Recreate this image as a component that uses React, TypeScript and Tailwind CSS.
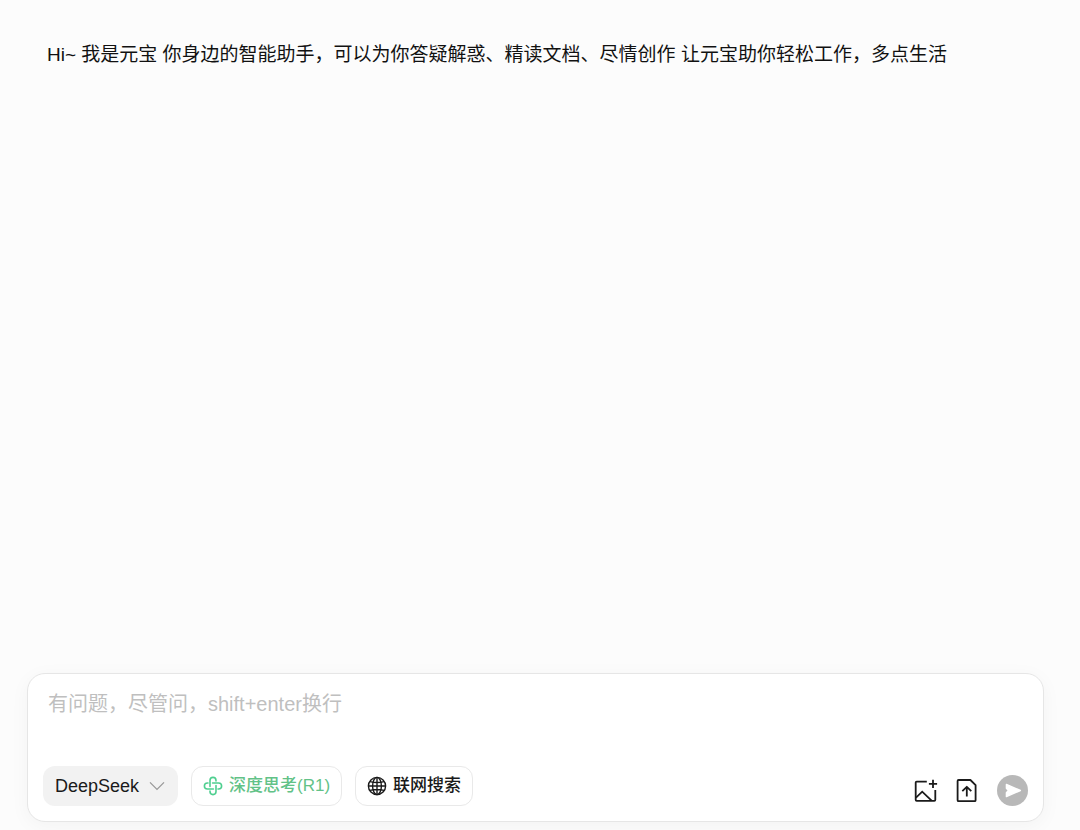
import { useState } from "react";

const fontStack = "font-['Liberation_Sans','Noto_Sans_CJK_SC',sans-serif]";

function ThinkIcon() {
  return (
    <svg className="size-5 shrink-0" viewBox="0 0 20 20" fill="none" stroke="#4fcf90" strokeWidth="1.6" strokeLinecap="round" aria-hidden="true">
      {[0, 90, 180, 270].map((angle) => (
        <path key={angle} d="M7 10.4V4.4a3 3 0 0 1 6 0V5" transform={`rotate(${angle} 10 10)`} />
      ))}
    </svg>
  );
}

function GlobeIcon() {
  return (
    <svg className="size-5 shrink-0" viewBox="0 0 20 20" fill="none" stroke="currentColor" strokeWidth="1.4" aria-hidden="true">
      <circle cx="10" cy="10" r="8.6" />
      <ellipse cx="10" cy="10" rx="4.4" ry="8.6" />
      <path d="M10 1.4v17.2M1.4 10h17.2M3 5.6c4 1 10 1 14 0M3 14.4c4-1 10-1 14 0" />
    </svg>
  );
}

function ImagePlusIcon() {
  return (
    <svg className="size-6" viewBox="0 0 24 24" fill="none" stroke="currentColor" strokeWidth="1.8" aria-hidden="true">
      <path d="M12.8 2.6H2.7a1 1 0 0 0-1 1v17.2a1 1 0 0 0 1 1h17.6a1 1 0 0 0 1-1V11" />
      <path d="M2 18.6l6.2-5.9 9.4 9" />
      <path d="M19 0.8v8.2M14.9 4.9h8.2" />
    </svg>
  );
}

function FileUploadIcon() {
  return (
    <svg className="size-6" viewBox="0 0 24 24" fill="none" stroke="currentColor" strokeWidth="1.8" strokeLinejoin="round" aria-hidden="true">
      <path d="M3.6 1h11.8l5.2 5.2v15a1 1 0 0 1-1 1h-16a1 1 0 0 1-1-1V2a1 1 0 0 1 1-1z" />
      <path d="M11.8 17.6V7.8M7.3 12.2l4.5-4.4 4.5 4.4" />
    </svg>
  );
}

export default function App() {
  const [deepThinking, setDeepThinking] = useState(true);
  const [webSearch, setWebSearch] = useState(false);

  return (
    <main className={`flex min-h-screen flex-col bg-[#fcfcfc] pt-[41px] pr-9 pb-2 pl-[27px] text-[#1a1a1a] ${fontStack}`}>
      <p className="px-5 text-[19px] leading-7 text-[#111111]">
        Hi~ 我是元宝 你身边的智能助手，可以为你答疑解惑、精读文档、尽情创作 让元宝助你轻松工作，多点生活
      </p>

      <form
        onSubmit={(event) => event.preventDefault()}
        className="mt-auto rounded-[18px] border border-[#e6e6e6] bg-white shadow-[0_4px_20px_rgba(0,0,0,0.04)]"
      >
        <textarea
          aria-label="输入问题"
          placeholder="有问题，尽管问，shift+enter换行"
          className="block h-[92px] w-full resize-none bg-transparent px-5 pt-4 text-xl leading-7 outline-none placeholder:text-[#bfbfbf]"
        />
        <div className="flex items-end justify-between px-[15px] pb-[15px]">
          <div className="flex gap-[13px] text-[17px] leading-6 font-medium">
            <div className="grid items-center">
              <select
                aria-label="模型"
                className="col-start-1 row-start-1 h-10 w-[135px] appearance-none rounded-xl bg-[#f2f2f2] pl-3 text-lg outline-none"
              >
                <option>DeepSeek</option>
              </select>
              <svg
                className="pointer-events-none col-start-1 row-start-1 mr-[13px] h-4 w-4 justify-self-end"
                viewBox="0 0 16 16"
                fill="none"
                stroke="#999999"
                strokeWidth="1.3"
                aria-hidden="true"
              >
                <path d="M1 4.4l7 7 7-7" />
              </svg>
            </div>
            <button
              type="button"
              aria-pressed={deepThinking}
              onClick={() => setDeepThinking(!deepThinking)}
              className="flex h-10 items-center gap-1.5 rounded-xl border border-[#e9e9e9] px-[11px] text-[#62c287]"
            >
              <ThinkIcon />
              深度思考(R1)
            </button>
            <button
              type="button"
              aria-pressed={webSearch}
              onClick={() => setWebSearch(!webSearch)}
              className="flex h-10 items-center gap-1.5 rounded-xl border border-[#e9e9e9] px-[11px]"
            >
              <GlobeIcon />
              联网搜索
            </button>
          </div>
          <div className="flex items-center">
            <button type="button" aria-label="上传图片" className="mr-[17px]">
              <ImagePlusIcon />
            </button>
            <button type="button" aria-label="上传文件" className="mr-[18px]">
              <FileUploadIcon />
            </button>
            <button type="submit" aria-label="发送" className="rounded-full bg-[#b8b8b8]">
              <svg className="size-[31px]" viewBox="0 0 31 31" fill="#ffffff" stroke="#ffffff" strokeLinejoin="round" aria-hidden="true">
                <path d="M9.4 9.4L23.4 15.5 9.4 21.6 9.4 17.8 11.4 15.5 9.4 13.2z" strokeWidth="1.4" />
              </svg>
            </button>
          </div>
        </div>
      </form>
    </main>
  );
}
